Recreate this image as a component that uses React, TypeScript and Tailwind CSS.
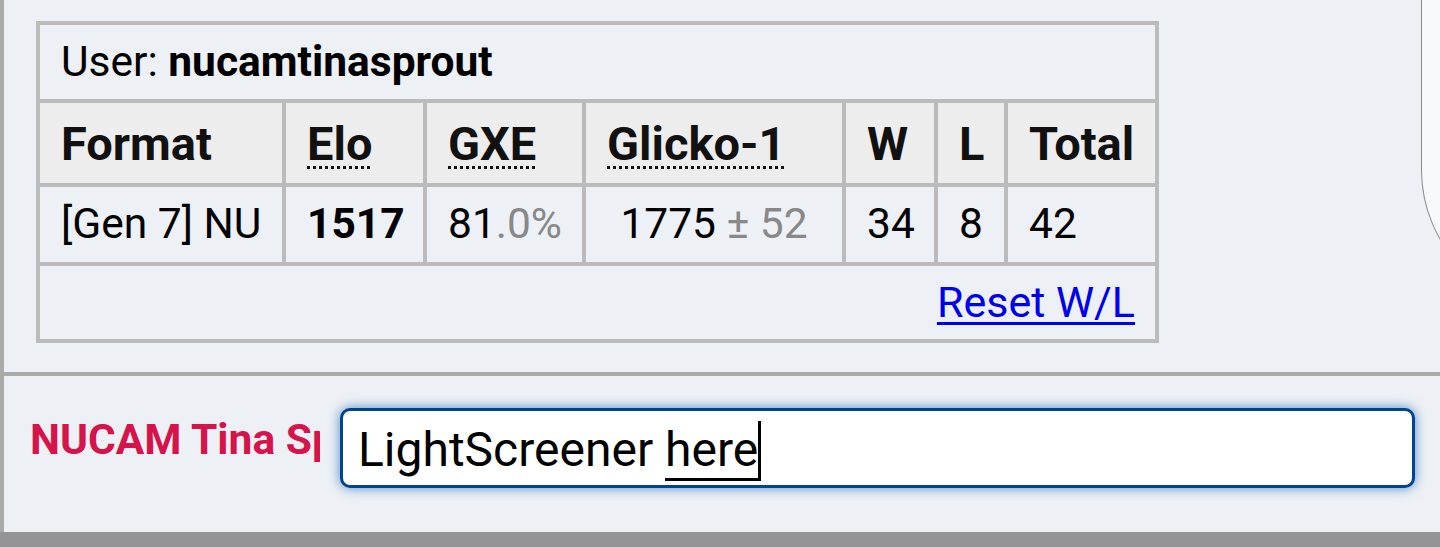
export default function App() {
  const cell = "border-r-4 border-b-4 border-[#bbbbbb] flex items-center pl-[21px]";
  const abbr = "underline decoration-dotted decoration-[3px] underline-offset-[6px]";
  return (
    <div className="relative w-[1440px] h-[547px] overflow-hidden bg-[#edf1f5] font-['Roboto',sans-serif] text-black flex flex-col">
      {/* right panel corner */}
      <div className="absolute left-[1421px] top-[-20px] w-[200px] h-[328px] rounded-bl-[138px] border-l-[1.5px] border-b-[1.5px] border-[#8a8a8a] bg-[#f8f9fb]" />

      <div className="h-[372px] shrink-0 border-l-4 border-[#aaaaaa] pl-[32px] pt-[21px]">
        <div className="w-[1123px] border-l-4 border-t-4 border-[#bbbbbb]">
          <div className="h-[78px] border-r-4 border-b-4 border-[#bbbbbb] flex items-center pl-[21px] text-[42.5px] leading-none">
            <span>User:&nbsp;</span>
            <span className="font-bold">nucamtinasprout</span>
          </div>
          <div className="grid grid-cols-[246px_141px_159px_260px_92px_70px_151px] h-[84px] bg-[#ededed] text-[47px] font-bold text-[#111111] leading-none">
            <div className={cell}>Format</div>
            <div className={cell}><span className={abbr}>Elo</span></div>
            <div className={cell}><span className={abbr}>GXE</span></div>
            <div className={cell}><span className={abbr}>Glicko-1</span></div>
            <div className={cell}>W</div>
            <div className={cell}>L</div>
            <div className={cell}>Total</div>
          </div>
          <div className="grid grid-cols-[246px_141px_159px_260px_92px_70px_151px] h-[79px] text-[42.5px] leading-none">
            <div className={cell}>[Gen 7] NU</div>
            <div className={cell}><span className="font-bold">1517</span></div>
            <div className={cell}>81<span className="text-[#888888]">.0%</span></div>
            <div className="border-r-4 border-b-4 border-[#bbbbbb] flex items-center justify-center">
              1775<span className="text-[#888888]">&nbsp;±&nbsp;52</span>
            </div>
            <div className={cell}>34</div>
            <div className={cell}>8</div>
            <div className={cell}>42</div>
          </div>
          <div className="h-[77px] border-r-4 border-b-4 border-[#bbbbbb] flex items-center justify-end pr-[20px] text-[43px] leading-none">
            <a href="#" className="text-[#0000ee] underline underline-offset-[5px] decoration-[3px]">Reset W/L</a>
          </div>
        </div>
      </div>

      <div className="h-[4px] shrink-0 bg-[#aaaaaa]" />

      <div className="h-[156px] shrink-0 border-l-4 border-[#aaaaaa] flex items-start pl-[26px]">
        <div className="w-[290px] mt-[43px] overflow-hidden whitespace-nowrap text-[42.5px] font-bold leading-none text-[#d6134a]">
          NUCAM Tina Sprout:
        </div>
        <div className="ml-[20px] mt-[32px] w-[1075px] h-[80px] rounded-[10px] border-[3px] border-[#00468c] bg-white shadow-[0_0_12px_rgba(30,100,190,0.75)] pl-[15px] pt-[10px] text-[48px] leading-none whitespace-nowrap">
          <span>LightScreener </span>
          <span className="border-b-[3px] border-black">here<span className="inline-block w-[3px] h-[57px] bg-black align-[-12px]" /></span>
        </div>
      </div>

      <div className="flex-1 bg-[#949398]" />
    </div>
  );
}
